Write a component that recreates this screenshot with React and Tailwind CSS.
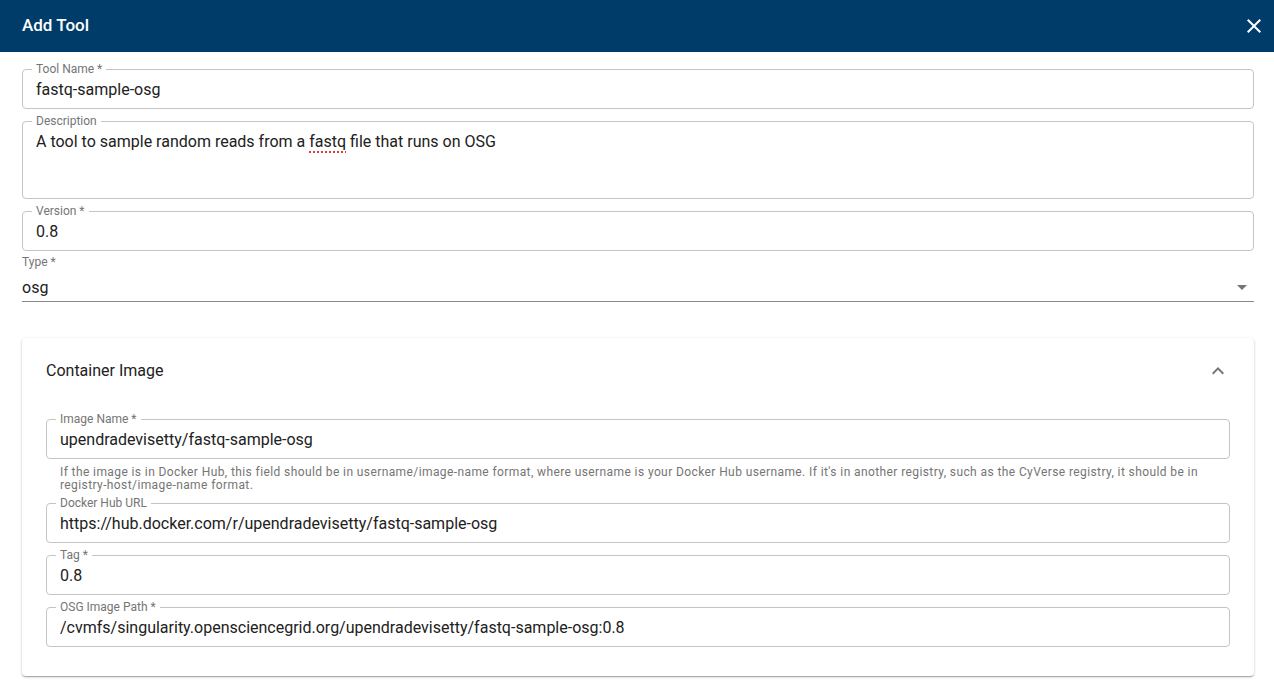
import React from 'react';

const font = { fontFamily: 'Roboto, "Liberation Sans", sans-serif' };

function OutlinedField({ label, value, multiline = false, className = '' }) {
  return (
    <div className={`relative ${className}`}>
      <div
        className={`border border-[#c4c4c4] rounded-[4px] px-[13px] ${multiline ? 'h-[78px] pt-[8px]' : 'h-[40px] flex items-center pt-[1px]'}`}
      >
        <span className="text-[16px] leading-[19px] text-[#212121] whitespace-nowrap">{value}</span>
      </div>
      <span className="absolute left-[10px] top-[-7px] bg-white px-[4px] text-[12px] leading-[14px] text-[#757575]">
        {label}
      </span>
    </div>
  );
}

export default function App() {
  return (
    <div className="w-[1274px] h-[684px] bg-white overflow-hidden" style={font}>
      {/* Header */}
      <div className="h-[52px] bg-[#003c69] flex items-center justify-between pl-[22px] pr-[8px]">
        <h1 className="text-white text-[17px] font-medium">Add Tool</h1>
        <button className="w-[24px] h-[24px] flex items-center justify-center">
          <svg width="24" height="24" viewBox="0 0 24 24" fill="white">
            <path d="M19 6.41 17.59 5 12 10.59 6.41 5 5 6.41 10.59 12 5 17.59 6.41 19 12 13.41 17.59 19 19 17.59 13.41 12z" />
          </svg>
        </button>
      </div>

      <div className="px-[22px] pr-[20px] pt-[17px]">
        <OutlinedField label="Tool Name *" value="fastq-sample-osg" />
        <OutlinedField
          className="mt-[12px]"
          label="Description"
          multiline
          value={
            <>
              A tool to sample random reads from a{' '}
              <span className="underline decoration-dotted decoration-[#e53935] decoration-2 underline-offset-[4px]">fastq</span>{' '}
              file that runs on OSG
            </>
          }
        />
        <OutlinedField className="mt-[12px]" label="Version *" value="0.8" />

        {/* Type select */}
        <div className="mt-[4px]">
          <div className="text-[12px] leading-[14px] text-[#757575]">Type *</div>
          <div className="h-[33px] border-b border-[#8a8a8a] flex items-center justify-between">
            <span className="text-[16px] leading-[19px] text-[#212121] pt-[4px]">osg</span>
            <svg width="24" height="24" viewBox="0 0 24 24" fill="#757575" className="mt-[4px]">
              <path d="M7 10l5 5 5-5z" />
            </svg>
          </div>
        </div>

        {/* Container Image card */}
        <div className="mt-[36px] rounded-[4px] bg-white shadow-[0_1px_3px_rgba(0,0,0,0.2),0_1px_1px_rgba(0,0,0,0.14),0_2px_1px_-1px_rgba(0,0,0,0.12)]">
          <div className="h-[64px] flex items-center justify-between pl-[24px] pr-[24px] pt-[2px]">
            <span className="text-[16px] text-[#212121]">Container Image</span>
            <svg width="24" height="24" viewBox="0 0 24 24" fill="#757575">
              <path d="M12 8l-6 6 1.41 1.41L12 10.83l4.59 4.58L18 14z" />
            </svg>
          </div>
          <div className="px-[24px] pt-[17px] pb-[29px]">
            <OutlinedField label="Image Name *" value="upendradevisetty/fastq-sample-osg" />
            <p className="mx-[14px] mt-[7px] text-[12px] leading-[13px] text-[#757575] tracking-[0.4px]">
              If the image is in Docker Hub, this field should be in username/image-name format, where username is your Docker Hub username. If it's in another registry, such as the CyVerse registry, it should be in registry-host/image-name format.
            </p>
            <OutlinedField className="mt-[11px]" label="Docker Hub URL" value="https://hub.docker.com/r/upendradevisetty/fastq-sample-osg" />
            <OutlinedField className="mt-[12px]" label="Tag *" value="0.8" />
            <OutlinedField
              className="mt-[12px]"
              label="OSG Image Path *"
              value="/cvmfs/singularity.opensciencegrid.org/upendradevisetty/fastq-sample-osg:0.8"
            />
          </div>
        </div>
      </div>
    </div>
  );
}
